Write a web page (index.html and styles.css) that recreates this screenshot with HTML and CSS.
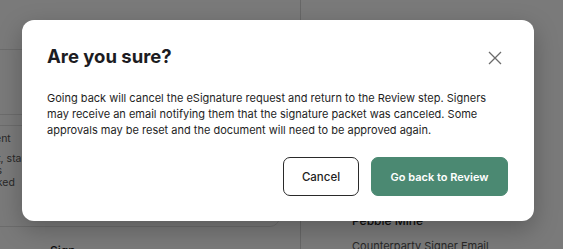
FILE: index.html
```html
<!DOCTYPE html>
<html>
<head>
<meta charset="utf-8">
<link rel="stylesheet" href="styles.css">
</head>
<body>
<div class="page">
  <div class="left">
    <div class="top-row"></div>
    <div class="sect"></div>
    <div class="card">
      <p class="c1">Signature Consent</p>
      <p class="c3">Once sent, standard signing</p>
      <p class="c4">process begins</p>
      <p class="c5">and is tracked</p>
    </div>
    <div class="sign">Sign</div>
  </div>
  <div class="right">
    <div class="r-top"></div>
    <div class="r-label">Pebble Mine</div>
    <div class="r-field">Counterparty Signer Email</div>
  </div>
</div>

<div class="overlay">
  <div class="modal" role="dialog">
    <div class="modal-head">
      <h2 class="title">Are you sure?</h2>
      <button class="close" aria-label="Close">
        <svg width="14" height="14" viewBox="0 0 14 14"><path d="M1 1L13 13M13 1L1 13" stroke="#6b6b6b" stroke-width="1.3" fill="none"/></svg>
      </button>
    </div>
    <p class="body-text">Going back will cancel the eSignature request and return to the Review step. Signers may receive an email notifying them that the signature packet was canceled. Some approvals may be reset and the document will need to be approved again.</p>
    <div class="actions">
      <button class="btn btn-outline">Cancel</button>
      <button class="btn btn-primary">Go back to Review</button>
    </div>
  </div>
</div>
</body>
</html>
```

FILE: styles.css
```css
* { box-sizing: border-box; }
html, body { margin: 0; padding: 0; }
body {
  font-family: Inter, "Noto Sans", sans-serif;
  background: #fff;
  width: 563px;
  height: 249px;
  overflow: hidden;
  position: relative;
  color: #1d1d22;
}
.page {
  display: flex;
  height: 249px;
}
.left {
  width: 301px;
  border-right: 1px solid #d8d8d8;
  display: flex;
  flex-direction: column;
  overflow: hidden;
}
.left > * { flex-shrink: 0; }
.top-row {
  height: 50px;
  border-bottom: 1px solid #e2e2e2;
}
.sect {
  height: 65px;
  border-bottom: 1px solid #e2e2e2;
}
.card {
  margin: 10px 20px 0 -30px;
  padding: 7px 0 0 0;
  border: 1px solid #e2e2e2;
  border-radius: 10px;
  height: 102px;
  font-size: 10.5px;
  color: #555;
  display: flex;
  flex-direction: column;
  align-items: flex-start;
}
.card p { margin: 0; line-height: 12px; white-space: nowrap; }
.card .c1 { margin-left: -52px; margin-bottom: 8px; }
.card .c3 { margin-left: -21px; }
.card .c4 { margin-left: -45px; }
.card .c5 { margin-left: -26px; }
.sign {
  padding: 16px 0 0 50px;
  font-size: 12px;
  line-height: 15px;
  font-weight: 500;
  color: #222;
}
.right {
  flex: 1;
  padding-left: 51px;
}
.r-top { height: 213px; }
.r-label {
  font-size: 12px;
  font-weight: 500;
  color: #222;
  height: 26px;
}
.r-field {
  font-size: 11px;
  color: #555;
}

.overlay {
  position: absolute;
  inset: 0;
  background: rgba(0, 0, 0, 0.52);
  padding: 20px 0 0 22px;
}
.modal {
  width: 512px;
  height: 201px;
  background: #fff;
  border-radius: 12px;
  padding: 24px 26px 25px 25px;
  box-shadow: 0 8px 24px rgba(0, 0, 0, 0.25);
  display: flex;
  flex-direction: column;
}
.modal-head {
  display: flex;
  justify-content: space-between;
  align-items: flex-start;
}
.title {
  margin: 0;
  font-size: 18.5px;
  line-height: 24px;
  font-weight: 700;
  color: #1c1c22;
}
.close {
  border: 0;
  background: none;
  padding: 0;
  margin: 7px 6px 0 0;
  width: 14px;
  height: 14px;
  display: flex;
}
.body-text {
  margin: 22px 0 0 0;
  font-size: 11px;
  line-height: 16px;
  color: #1e1e1e;
}
.actions {
  margin-top: 19px;
  display: flex;
  justify-content: flex-end;
  gap: 12px;
}
.btn {
  height: 39px;
  border-radius: 7px;
  font-family: Inter, "Noto Sans", sans-serif;
  font-size: 11.5px;
  font-weight: 500;
  padding: 0;
}
.btn-outline {
  width: 76px;
  background: #fff;
  border: 1px solid #2a2a2a;
  color: #1d1d22;
}
.btn-primary {
  width: 137px;
  background: #4b8972;
  border: 1px solid #4b8972;
  color: #fff;
  font-size: 11px;
  font-weight: 600;
}
```
